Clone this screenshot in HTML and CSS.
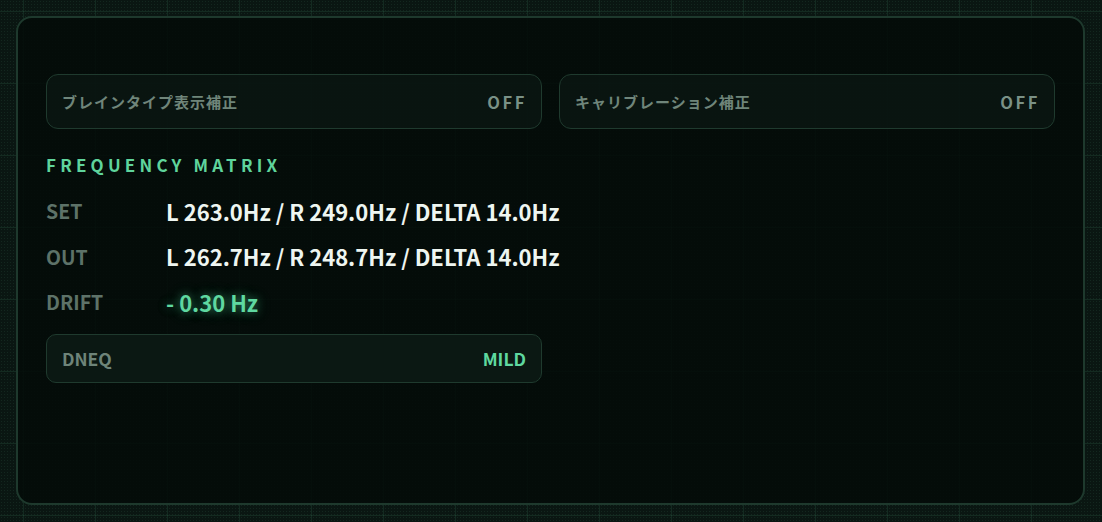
FILE: index.html
```html
<!DOCTYPE html>
<html lang="ja">
<head>
<meta charset="utf-8">
<title>Frequency Matrix</title>
<link rel="stylesheet" href="styles.css">
</head>
<body>
<main class="panel">
  <div class="toggles">
    <div class="toggle">
      <span class="toggle-label">ブレインタイプ表示補正</span>
      <span class="toggle-state">OFF</span>
    </div>
    <div class="toggle">
      <span class="toggle-label">キャリブレーション補正</span>
      <span class="toggle-state">OFF</span>
    </div>
  </div>
  <h2 class="section-title">FREQUENCY MATRIX</h2>
  <div class="rows">
    <div class="row"><span class="row-label">SET</span><span class="row-value">L 263.0Hz / R 249.0Hz / DELTA 14.0Hz</span></div>
    <div class="row"><span class="row-label">OUT</span><span class="row-value">L 262.7Hz / R 248.7Hz / DELTA 14.0Hz</span></div>
    <div class="row"><span class="row-label">DRIFT</span><span class="row-value drift">- 0.30 Hz</span></div>
  </div>
  <div class="grid-two">
    <div class="chip">
      <span class="chip-label">DNEQ</span>
      <span class="chip-value">MILD</span>
    </div>
  </div>
</main>
</body>
</html>
```

FILE: styles.css
```css
* { box-sizing: border-box; }

html, body {
  margin: 0;
  height: 100%;
}

body {
  padding: 16px 17px 17px 16px;
  font-family: "Noto Sans CJK JP", "Noto Sans", sans-serif;
  background-color: #0a1612;
  background-image:
    linear-gradient(to right, rgba(70, 150, 110, 0.16) 1px, transparent 1px),
    linear-gradient(to bottom, rgba(70, 150, 110, 0.16) 1px, transparent 1px),
    radial-gradient(rgba(60, 120, 90, 0.18) 0.6px, transparent 0.8px);
  background-size: 72px 72px, 72px 72px, 3px 3px;
  background-position: 23px 0, 0 11px, 0 0;
}

.panel {
  height: 489px;
  border: 2px solid #1e392d;
  border-radius: 16px;
  background: rgba(4, 10, 8, 0.86);
  padding: 56px 28px 0 28px;
  display: flex;
  flex-direction: column;
}

.toggles {
  display: grid;
  grid-template-columns: 1fr 1fr;
  gap: 17px;
}

.toggle {
  height: 55px;
  border: 1.5px solid #1f3a2e;
  border-radius: 12px;
  background: rgba(12, 24, 20, 0.7);
  display: flex;
  align-items: center;
  justify-content: space-between;
  padding: 0 14px 0 15px;
}

.toggle-label {
  font-size: 15px;
  font-weight: 700;
  letter-spacing: 1px;
  color: #6f857a;
}

.toggle-state {
  font-size: 16.5px;
  font-weight: 700;
  letter-spacing: 2.6px;
  color: #7a9186;
}

.section-title {
  margin: 12px 0 0 0;
  height: 47px;
  display: flex;
  align-items: center;
  font-size: 17px;
  font-weight: 700;
  letter-spacing: 4.2px;
  color: #5fd49c;
}

.rows {
  display: flex;
  flex-direction: column;
}

.row {
  height: 45.5px;
  display: flex;
  align-items: center;
}

.row-label {
  width: 120px;
  font-size: 19.5px;
  font-weight: 700;
  color: #5d7268;
}

.row-value {
  font-size: 22px;
  font-weight: 700;
  color: #eef6f1;
}

.row-value.drift {
  color: #5fd8a0;
  text-shadow: 0 0 8px rgba(80, 210, 150, 0.5), 0 0 16px rgba(80, 210, 150, 0.25);
}

.grid-two {
  display: grid;
  grid-template-columns: 1fr 1fr;
  gap: 17px;
  margin-top: 9px;
}

.chip {
  height: 49px;
  border: 1.5px solid #1f3a2e;
  border-radius: 10px;
  background: rgba(14, 28, 23, 0.75);
  display: flex;
  align-items: center;
  justify-content: space-between;
  padding: 0 15px 0 15px;
}

.chip-label {
  font-size: 17.5px;
  font-weight: 700;
  color: #6e8479;
}

.chip-value {
  font-size: 17.5px;
  font-weight: 700;
  color: #5fd8a0;
}
```
